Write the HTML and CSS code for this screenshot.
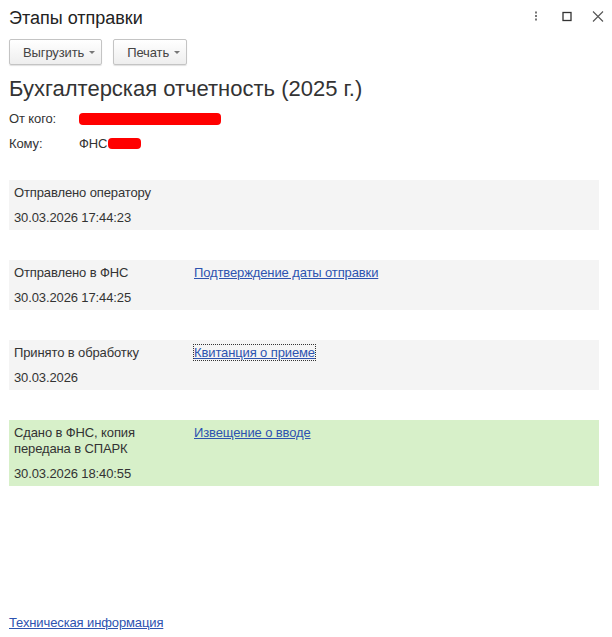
FILE: index.html
```html
<!DOCTYPE html>
<html lang="ru">
<head>
  <meta charset="UTF-8">
  <title>Этапы отправки</title>
  <link rel="stylesheet" href="styles.css">
</head>
<body>
  <div class="form">
    <div class="header">
      <div class="title">Этапы отправки</div>
      <div class="window-btns">
        <svg class="ico" width="12" height="12" viewBox="0 0 12 12">
          <rect x="5" y="0.5" width="2" height="2" fill="#777"/>
          <rect x="5" y="4" width="2" height="2" fill="#777"/>
          <rect x="5" y="7.5" width="2" height="2" fill="#777"/>
        </svg>
        <svg class="ico" width="12" height="12" viewBox="0 0 12 12">
          <rect x="2" y="1.5" width="8" height="8" fill="none" stroke="#333" stroke-width="1.3"/>
        </svg>
        <svg class="ico" width="12" height="12" viewBox="0 0 12 12">
          <path d="M1 0.5 L11 10.5 M11 0.5 L1 10.5" stroke="#555" stroke-width="1.1" fill="none"/>
        </svg>
      </div>
    </div>

    <div class="toolbar">
      <button type="button" class="btn">Выгрузить <span class="caret"></span></button>
      <button type="button" class="btn">Печать <span class="caret"></span></button>
    </div>

    <h1 class="doc-title">Бухгалтерская отчетность (2025 г.)</h1>

    <div class="fields">
      <div class="label">От кого:</div>
      <div class="value"><span class="redact wide"></span></div>
      <div class="label">Кому:</div>
      <div class="value">ФНС<span class="redact small"></span></div>
    </div>

    <div class="stages">
      <div class="stage">
        <div class="stage-info">
          <div class="stage-name">Отправлено оператору</div>
          <div class="stage-date">30.03.2026 17:44:23</div>
        </div>
        <div class="stage-doc"></div>
      </div>

      <div class="stage">
        <div class="stage-info">
          <div class="stage-name">Отправлено в ФНС</div>
          <div class="stage-date">30.03.2026 17:44:25</div>
        </div>
        <div class="stage-doc"><a href="#">Подтверждение даты отправки</a></div>
      </div>

      <div class="stage">
        <div class="stage-info">
          <div class="stage-name">Принято в обработку</div>
          <div class="stage-date">30.03.2026</div>
        </div>
        <div class="stage-doc"><a href="#" class="focused">Квитанция о приеме</a></div>
      </div>

      <div class="stage done">
        <div class="stage-info">
          <div class="stage-name">Сдано в ФНС, копия<br>передана в СПАРК</div>
          <div class="stage-date">30.03.2026 18:40:55</div>
        </div>
        <div class="stage-doc"><a href="#">Извещение о вводе</a></div>
      </div>
    </div>

    <div class="footer">
      <a href="#">Техническая информация</a>
    </div>
  </div>
</body>
</html>
```

FILE: styles.css
```css
body {
  margin: 0;
  background: #fff;
  font-family: "Liberation Sans", Arial, sans-serif;
  font-size: 13px;
  letter-spacing: -0.12px;
  color: #333;
}

.form {
  box-sizing: border-box;
  height: 637px;
  padding: 0 9px;
  display: flex;
  flex-direction: column;
}

.header {
  display: flex;
  align-items: center;
  justify-content: space-between;
  height: 36px;
}

.title {
  font-size: 18px;
  letter-spacing: 0;
  color: #222;
}

.window-btns {
  display: flex;
  gap: 19px;
  margin-right: -1px;
  margin-top: -3px;
}

.ico {
  display: block;
}

.toolbar {
  display: flex;
  gap: 11px;
  margin-top: 3px;
}

.btn {
  height: 26px;
  padding: 0 6px 0 13px;
  font-family: inherit;
  font-size: 13px;
  letter-spacing: -0.12px;
  color: #444;
  background: linear-gradient(to bottom, #ffffff, #eeeeee);
  border: 1px solid #c4c4c4;
  border-radius: 2px;
  box-shadow: 0 1px 1px rgba(0, 0, 0, 0.12);
  display: flex;
  align-items: center;
  gap: 5px;
  cursor: pointer;
}

.caret {
  width: 0;
  height: 0;
  border-left: 3px solid transparent;
  border-right: 3px solid transparent;
  border-top: 3px solid #777;
  margin-top: 1px;
}

.doc-title {
  font-size: 22px;
  font-weight: normal;
  letter-spacing: 0;
  color: #333;
  margin: 11px 0 0;
  line-height: 26px;
}

.fields {
  display: grid;
  grid-template-columns: 70px 1fr;
  grid-auto-rows: 25px;
  align-items: center;
  margin-top: 4px;
}

.value {
  display: flex;
  align-items: center;
}

.redact {
  display: inline-block;
  background: #ff0000;
  border-radius: 4px;
}

.redact.wide {
  width: 142px;
  height: 12px;
}

.redact.small {
  width: 33px;
  height: 11px;
  margin-left: 1px;
}

.stages {
  display: flex;
  flex-direction: column;
  gap: 30px;
  margin-top: 24px;
}

.stage {
  display: grid;
  grid-template-columns: 180px 1fr;
  padding: 5px 5px 4px;
  background: #f4f4f4;
  margin-right: 4px;
  line-height: 16px;
}

.stage.done {
  background: #d7f0c9;
}

.stage-date {
  margin-top: 9px;
}

a {
  color: #2d53b0;
  text-decoration: underline;
}

a.focused {
  outline: 1px dotted #333;
  outline-offset: 0;
}

.footer {
  margin-top: auto;
  padding-bottom: 7px;
}
```
